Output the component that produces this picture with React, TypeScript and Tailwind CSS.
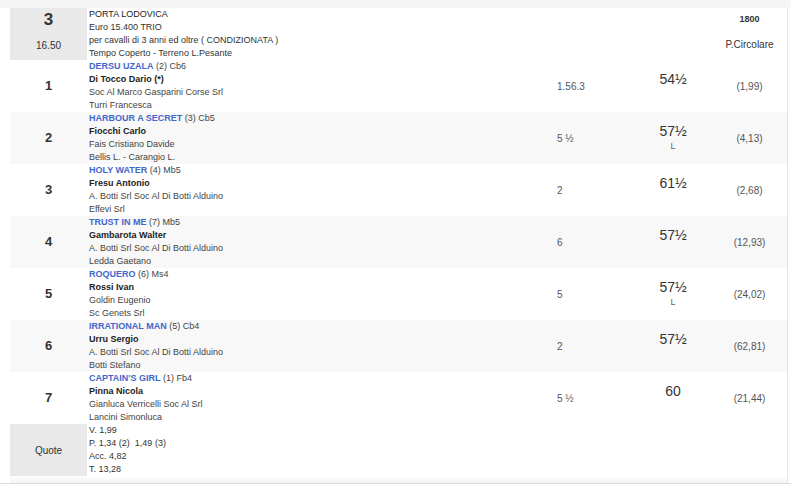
import React from 'react';

type Runner = {
  pos: string;
  horse: string;
  info: string;
  jockey: string;
  owner: string;
  trainer: string;
  time: string;
  weight: string;
  note: string;
  odds: string;
};

const runners: Runner[] = [
  { pos: '1', horse: 'DERSU UZALA', info: '(2) Cb6', jockey: 'Di Tocco Dario (*)', owner: 'Soc Al Marco Gasparini Corse Srl', trainer: 'Turri Francesca', time: '1.56.3', weight: '54½', note: '', odds: '(1,99)' },
  { pos: '2', horse: 'HARBOUR A SECRET', info: '(3) Cb5', jockey: 'Fiocchi Carlo', owner: 'Fais Cristiano Davide', trainer: 'Bellis L. - Carangio L.', time: '5 ½', weight: '57½', note: 'L', odds: '(4,13)' },
  { pos: '3', horse: 'HOLY WATER', info: '(4) Mb5', jockey: 'Fresu Antonio', owner: 'A. Botti Srl Soc Al Di Botti Alduino', trainer: 'Effevi Srl', time: '2', weight: '61½', note: '', odds: '(2,68)' },
  { pos: '4', horse: 'TRUST IN ME', info: '(7) Mb5', jockey: 'Gambarota Walter', owner: 'A. Botti Srl Soc Al Di Botti Alduino', trainer: 'Ledda Gaetano', time: '6', weight: '57½', note: '', odds: '(12,93)' },
  { pos: '5', horse: 'ROQUERO', info: '(6) Ms4', jockey: 'Rossi Ivan', owner: 'Goldin Eugenio', trainer: 'Sc Genets Srl', time: '5', weight: '57½', note: 'L', odds: '(24,02)' },
  { pos: '6', horse: 'IRRATIONAL MAN', info: '(5) Cb4', jockey: 'Urru Sergio', owner: 'A. Botti Srl Soc Al Di Botti Alduino', trainer: 'Botti Stefano', time: '2', weight: '57½', note: '', odds: '(62,81)' },
  { pos: '7', horse: "CAPTAIN'S GIRL", info: '(1) Fb4', jockey: 'Pinna Nicola', owner: 'Gianluca Verricelli Soc Al Srl', trainer: 'Lancini Simonluca', time: '5 ½', weight: '60', note: '', odds: '(21,44)' },
];

const row = 'grid grid-cols-[77px_470px_83px_66px_81px] h-[52px]';

export default function App() {
  return (
    <div className="min-h-screen bg-white font-['Liberation_Sans',Arial,sans-serif] text-[#444]">
      <div className="h-[8px] bg-[#f5f5f5]" />
      <div className="ml-[10px] w-[778px] border-r border-[#e6e6e6]">
        {/* Race header */}
        <div className={row}>
          <div className="flex flex-col items-center bg-[#e9e9e9] pt-[2px] text-[#333]">
            <span className="text-[17px] font-bold leading-[20px]">3</span>
            <span className="mt-[9px] text-[10px] leading-[13px]">16.50</span>
          </div>
          <div className="pl-[2px] text-[9px] leading-[13px] text-[#333]">
            <div className="text-[#222]">PORTA LODOVICA</div>
            <div>Euro 15.400 TRIO</div>
            <div>per cavalli di 3 anni ed oltre ( CONDIZIONATA )</div>
            <div>Tempo Coperto - Terreno L.Pesante</div>
          </div>
          <div />
          <div />
          <div className="flex flex-col items-center pl-[6px] pt-[5px] text-[#333]">
            <span className="text-[9px] font-bold leading-[13px]">1800</span>
            <span className="mt-[12px] text-[10px] leading-[13px]">P.Circolare</span>
          </div>
        </div>

        {runners.map((r, i) => (
          <div key={r.pos} className={`${row} ${i % 2 === 1 ? 'bg-[#f8f8f8]' : 'bg-white'}`}>
            <div className="flex items-center justify-center text-[13px] font-bold text-[#333]">{r.pos}</div>
            <div className="pl-[2px] text-[9px] leading-[13px]">
              <div>
                <span className="font-bold text-[#4466cc]">{r.horse}</span> <span>{r.info}</span>
              </div>
              <div className="font-bold text-[#222]">{r.jockey}</div>
              <div>{r.owner}</div>
              <div>{r.trainer}</div>
            </div>
            <div className="flex items-center text-[10px] text-[#555]">{r.time}</div>
            <div className="flex flex-col items-center justify-center">
              <span className="text-[14px] leading-[15px] text-[#333]">{r.weight}</span>
              <span className="text-[9px] leading-[14px] text-[#666]">{r.note || '\u00a0'}</span>
            </div>
            <div className="flex items-center justify-center pl-[6px] text-[10px] text-[#555]">{r.odds}</div>
          </div>
        ))}

        {/* Quote */}
        <div className={row}>
          <div className="flex items-center justify-center bg-[#e9e9e9] text-[10px] text-[#333]">Quote</div>
          <div className="whitespace-pre pl-[2px] text-[9px] leading-[13px] text-[#333]">
            <div>V. 1,99</div>
            <div>P. 1,34 (2)  1,49 (3)</div>
            <div>Acc. 4,82</div>
            <div>T. 13,28</div>
          </div>
          <div />
          <div />
          <div />
        </div>
        <div className="h-[7px] bg-gradient-to-b from-white to-[#f3f3f3]" />
      </div>
      <div className="h-px bg-[#dcdcdc]" />
    </div>
  );
}
